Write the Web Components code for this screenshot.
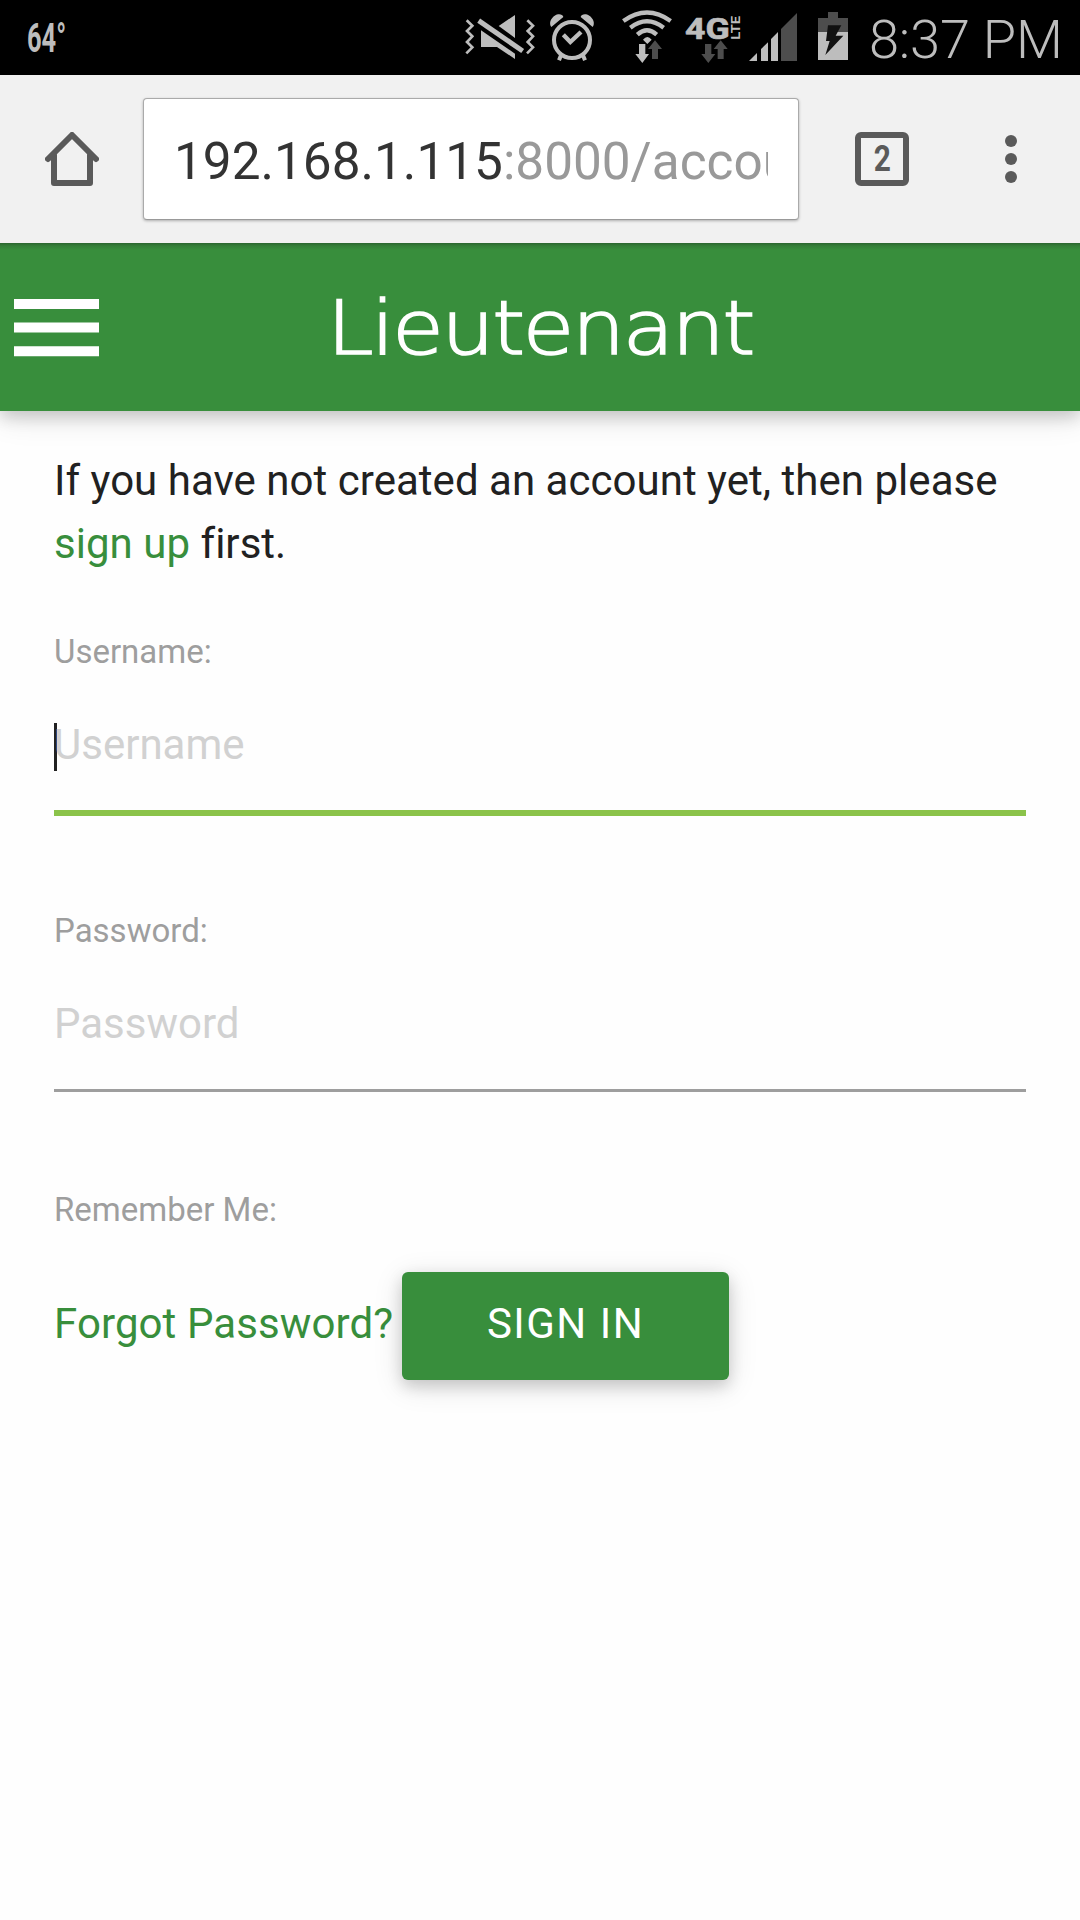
<!DOCTYPE html>
<html lang="en"><head><meta charset="utf-8"><title>Lieutenant</title>
<style>
html,body{margin:0;background:#fefefe}
body{width:1080px;height:1920px;overflow:hidden;font-family:Roboto,"Liberation Sans",sans-serif}
</style></head><body>
<phone-screen>
<status-bar></status-bar>
<browser-bar><span slot="host">192.168.1.115</span><span slot="path">:8000/account</span></browser-bar>
<app-header>Lieutenant</app-header>
<sign-in-form>
<form-field focused placeholder="Username">Username:</form-field>
<form-field placeholder="Password">Password:</form-field>
</sign-in-form>
</phone-screen>
<script>
const define=(name,html,setup)=>customElements.define(name,class extends HTMLElement{
  constructor(){super();this.attachShadow({mode:'open'}).innerHTML=html;}
  connectedCallback(){if(setup)setup(this);}
});
define('phone-screen',`<style>:host{display:flex;flex-direction:column;width:1080px;height:1920px}</style><slot></slot>`);
define('status-bar',`<style>
:host{display:flex;height:75px;background:#000;color:#bdbdbd;flex:none}
svg{display:block;height:75px;flex:none;fill:#bdbdbd;overflow:visible}
.temp{width:435px;padding-left:27px;box-sizing:border-box;line-height:76px;font-size:41px;font-weight:700;white-space:nowrap}
.temp span{display:inline-block;transform:scaleX(.62);transform-origin:0 50%}
.time{margin-left:20px;font-size:54.2px;font-weight:300;line-height:80px;white-space:nowrap;letter-spacing:-.2px}
.dim{fill:#4d4d4d}
</style>
<div class="temp"><span>64°</span></div>
<svg style="margin-left:28px" width="75" viewBox="39 0 225 225"><g fill="none" stroke="#bdbdbd" stroke-width="8"><path d="M50 61L67 77L51 93L67 109L51 126L67 142L49 160M232 61L249 77L233 93L249 109L233 126L249 142L231 160"/><path d="M86 62L218 153" stroke-width="15"/></g><path d="M146 78L195 45V114ZM93 91L195 161V177L141 141H93Z"/></svg>
<svg style="margin-left:10px" width="48" viewBox="294 0 144 225"><g fill="none" stroke="#bdbdbd"><circle cx="366" cy="120" r="54" stroke-width="12"/><path d="M340 104L361 126L393 96" stroke-width="13"/><path d="M333 166L327 181M399 166L405 181" stroke-width="12"/></g><path d="M304 81C296 70 302 55 314 47C326 40 338 43 340 51ZM428 81C436 70 430 55 418 47C406 40 394 43 392 51Z"/></svg>
<svg style="margin-left:24px" width="53" viewBox="510 0 159 225"><g fill="none" stroke="#bdbdbd" stroke-width="13"><path d="M520 63Q591 12 662 63M541 83Q591 44 641 83M562 104Q591 78 620 104"/></g><path d="M579 119Q592 103 605 119L592 132ZM567 132H586V162H597L577 189L556 162H567Z"/><path class="dim" d="M606 177H624V147H636L615 121L594 147H606Z"/></svg>
<svg style="margin-left:12px" width="56" viewBox="705 0 168 225"><text x="705" y="116" font-family="Roboto" font-weight="700" font-size="91" stroke="#bdbdbd" stroke-width="2" textLength="134" lengthAdjust="spacingAndGlyphs">4G</text><text transform="translate(870 119) rotate(-90)" font-family="Roboto" font-weight="700" font-size="36" textLength="71" lengthAdjust="spacingAndGlyphs">LTE</text><path class="dim" d="M765 132H784V162H796L775 189L754 162H765ZM803 177H821V147H833L812 121L791 147H803Z"/></svg>
<svg style="margin-left:7px" width="50" viewBox="24 0 150 225"><path d="M27 183L51 159V183ZM63 147L84 127V183H63ZM93 117L114 96V183H93Z"/><path class="dim" d="M123 87L171 39V183H123Z"/></svg>
<svg style="margin-left:19px" width="32" viewBox="231 0 96 225"><path class="dim" d="M234 54H264V36H294V54H324V97H234Z"/><path d="M234 96H324V180H234Z"/><path fill="#111" d="M264 76H304L287 107H310L256 165L269 123H258Z"/></svg>
<div class="time">8:37 PM</div>`);
define('browser-bar',`<style>
:host{display:flex;height:168px;flex:none;background:#f1f1f1;align-items:center;position:relative;z-index:1}
.home{margin:0 44px 0 45px;display:block}
.url{width:656px;height:122px;box-sizing:border-box;border:1px solid #aaa;border-bottom:1px solid #999;border-radius:4px;background:#fff;box-shadow:0 1px 3px rgba(0,0,0,.28);padding:0 30px;font-size:51.3px;line-height:126px;color:#333}
.clip{overflow:hidden;white-space:nowrap;display:flex}
.path{color:#999}
.tabs{width:54px;height:54px;box-sizing:border-box;border:6px solid #5a5a5a;border-radius:6px;margin-left:56px;text-align:center;line-height:43px;font-size:36px;font-weight:700;color:#5a5a5a}
.tabs span{display:inline-block;transform:scaleX(.83)}
.menu{margin-left:96px}
</style>
<svg class="home" width="54" height="54" fill="none" stroke="#5a5a5a" stroke-width="6" stroke-linecap="round" stroke-linejoin="round"><path d="M3 27L27 3L51 27M9 23V51H45V23"/></svg>
<div class="url"><div class="clip"><slot name="host"></slot><span class="path"><slot name="path"></slot></span></div></div>
<div class="tabs"><span>2</span></div>
<svg class="menu" width="12" height="48" fill="#5a5a5a"><circle cx="6" cy="6" r="6"/><circle cx="6" cy="24" r="6"/><circle cx="6" cy="42" r="6"/></svg>`);
define('app-header',`<style>
:host{display:grid;grid-template-columns:99px 1fr 99px;align-items:center;height:168px;flex:none;background:linear-gradient(#2c662f,#357f38 3px,#388e3c 7px);box-shadow:0 6px 15px rgba(0,0,0,.16),0 6px 30px rgba(0,0,0,.12);color:#fff}
svg{margin:1px 0 0 14px;display:block}
.logo{text-align:center;font-family:"DejaVu Sans Light","DejaVu Sans",sans-serif;font-weight:200;font-size:74px;letter-spacing:-2px;line-height:168px;padding-top:1px;white-space:nowrap;transform:scaleX(1.13);-webkit-text-stroke:1.6px #fff}
</style>
<svg width="85" height="58" fill="#fff"><path d="M0 0H85V10H0ZM0 23.6H85V33.6H0ZM0 47.2H85V57.2H0Z"/></svg>
<div class="logo"><slot></slot></div>`);
define('sign-in-form',`<style>
:host{display:flex;flex-direction:column;padding:38px 54px 0;font-size:42px;color:#212121}
p{margin:0 0 52px;line-height:63px;letter-spacing:.03px}
a{color:#388e3c}
.remember{font-size:33px;line-height:50px;color:#9e9e9e}
.actions{display:flex;margin-top:37px;align-items:center;line-height:104px;white-space:nowrap}
.actions a{width:348px;height:108px;letter-spacing:.1px}
button{width:327px;height:108px;border:0;padding:0 0 6px;border-radius:6px;background:#388e3c;color:#fff;font:42px Roboto,sans-serif;letter-spacing:1.5px;box-shadow:0 6px 15px rgba(0,0,0,.16),0 6px 30px rgba(0,0,0,.12)}
</style>
<p>If you have not created an account yet, then please<br><a>sign up</a> first.</p>
<slot></slot>
<div class="remember">Remember Me:</div>
<div class="actions"><a>Forgot Password?</a><button>SIGN IN</button></div>`);
define('form-field',`<style>
:host{display:flex;flex-direction:column;height:279px}
label{font-size:33px;line-height:50px;color:#9e9e9e}
.input{box-sizing:border-box;margin-top:7px;border-bottom:3px solid #9e9e9e;display:flex;line-height:121px;color:#d1d1d1;height:129px}
:host([focused]) .input{border-bottom:6px solid #8bc34a;height:132px}
.caret{display:none}
:host([focused]) .caret{display:block;width:3px;height:48px;margin:39px -3px 0 0;background:#212121}
</style>
<label><slot></slot></label><div class="input"><i class="caret"></i><span class="ph"></span></div>`,
el=>{el.shadowRoot.querySelector('.ph').textContent=el.getAttribute('placeholder');});
</script>
</body></html>
